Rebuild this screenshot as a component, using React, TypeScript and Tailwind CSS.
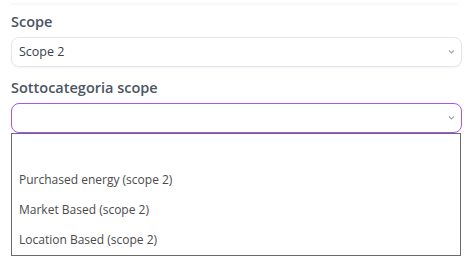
import React from "react";

function Chevron() {
  return (
    <svg width="7" height="5" viewBox="0 0 7 5" className="absolute right-[6px] top-1/2 -translate-y-1/2">
      <path d="M1 1 L3.5 3.5 L6 1" fill="none" stroke="#a3a3a3" strokeWidth="1.1" />
    </svg>
  );
}

export default function App() {
  return (
    <div className="w-[468px] h-[260px] bg-white overflow-hidden relative" style={{ fontFamily: '"Open Sans", sans-serif' }}>
      <div className="h-[3px] mx-[10px] shadow-[0_1px_3px_rgba(0,0,0,0.06)]" />
      <div className="px-[11px] pt-[9px]">
        <div className="text-[14.5px] font-semibold text-[#4b5563] leading-[20px]">Scope</div>
        <div className="relative mt-[5px] h-[30px] w-[451px] rounded-[8px] border border-[#e2e6ee] shadow-[0_1px_2px_rgba(0,0,0,0.05)] flex items-center px-[7px]">
          <span className="text-[12.5px] text-[#374151]">Scope 2</span>
          <Chevron />
        </div>
        <div className="mt-[11px] text-[14.5px] font-semibold text-[#4b5563] leading-[20px]">Sottocategoria scope</div>
        <div className="relative mt-[5px] h-[30px] w-[451px] rounded-[8px] border-[1.5px] border-[#a855f7] flex items-center px-[7px]">
          <Chevron />
        </div>
        <div className="w-[450px] border border-[#6b6b6b] bg-white text-[12px] text-[#4a4a4a]">
          <div className="h-[31px]" />
          <div className="h-[30px] flex items-center px-[7px]">Purchased energy (scope 2)</div>
          <div className="h-[30px] flex items-center px-[7px]">Market Based (scope 2)</div>
          <div className="h-[30px] flex items-center px-[7px]">Location Based (scope 2)</div>
        </div>
      </div>
    </div>
  );
}
